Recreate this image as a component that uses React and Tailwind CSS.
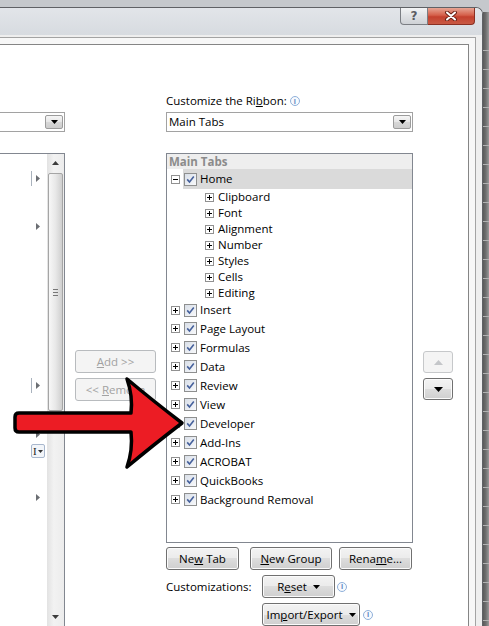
import React from "react";

const FONT = { fontFamily: '"Open Sans", "Noto Sans", sans-serif' };

function Check() {
  return (
    <div className="w-[13px] h-[13px] border border-[#8e8f8f] bg-gradient-to-br from-[#d9dfe8] to-[#f8f9fb] flex items-center justify-center shrink-0">
      <svg width="9" height="9" viewBox="0 0 9 9">
        <path d="M1.2 4.4 L3.5 7 L7.8 1.5" fill="none" stroke="#46619c" strokeWidth="1.6" />
      </svg>
    </div>
  );
}

function Expander({ minus }) {
  return (
    <div className="w-[9px] h-[9px] border border-[#919191] bg-white flex items-center justify-center shrink-0">
      <svg width="7" height="7" viewBox="0 0 7 7">
        <rect x="1" y="3" width="5" height="1" fill="#000" />
        {!minus && <rect x="3" y="1" width="1" height="5" fill="#000" />}
      </svg>
    </div>
  );
}

function Info() {
  return (
    <div className="w-[10px] h-[10px] rounded-full border border-[#8fb0da] bg-[#f7fafe] flex items-center justify-center shrink-0">
      <span className="text-[7px] leading-none font-bold text-[#5b86c0]">i</span>
    </div>
  );
}

function DownTri({ color = "#000" }) {
  return (
    <svg width="7" height="4" viewBox="0 0 7 4">
      <path d="M0 0 H7 L3.5 4 Z" fill={color} />
    </svg>
  );
}

function DropBtn() {
  return (
    <div className="w-[18px] h-[14px] mr-[1px] border border-[#9c9c9c] rounded-[2px] bg-[linear-gradient(#f6f6f6,#e6e6e6_50%,#d8d8d8_50%,#cdcdcd)] flex items-center justify-center">
      <DownTri />
    </div>
  );
}

const WINBTN =
  "h-[23px] shrink-0 border border-[#707070] rounded-[3px] bg-[linear-gradient(#f3f3f3,#ebebeb_50%,#dddddd_50%,#cfcfcf)] shadow-[inset_0_0_0_1px_#fbfbfb] flex items-center justify-center text-[11.5px] text-black";

const DISBTN =
  "h-[23px] shrink-0 border border-[#b8bbbe] rounded-[3px] bg-[#f4f4f4] flex items-center justify-center text-[11.5px] text-[#a2a2a2]";

const children = ["Clipboard", "Font", "Alignment", "Number", "Styles", "Cells", "Editing"];
const tops = [
  ["Insert", "h-[18px]"],
  ["Page Layout", "h-[19px]"],
  ["Formulas", "h-[19px]"],
  ["Data", "h-[19px]"],
  ["Review", "h-[19px]"],
  ["View", "h-[19px]"],
  ["Developer", "h-[19px]"],
  ["Add-Ins", "h-[19px]"],
  ["ACROBAT", "h-[19px]"],
  ["QuickBooks", "h-[19px]"],
  ["Background Removal", "h-[19px]"],
];

function RightTri() {
  return (
    <svg width="4" height="7" viewBox="0 0 4 7">
      <path d="M0 0 L4 3.5 L0 7 Z" fill="#6b6e73" />
    </svg>
  );
}

function SideArrow({ line, mt }) {
  return (
    <div className={`flex items-center h-[15px] shrink-0 ${mt}`}>
      <div className={`ml-[31px] w-px h-[15px] ${line ? "bg-[#a9b2bd]" : "bg-transparent"}`} />
      <div className="ml-[4px]">
        <RightTri />
      </div>
    </div>
  );
}

export default function App() {
  return (
    <div className="relative w-[489px] h-[626px] overflow-hidden flex bg-[#c5c8cc]" style={FONT}>
      {/* dialog */}
      <div className="w-[483px] h-[626px] shrink-0 flex flex-col pt-[7px]">
        <div className="flex-1 min-h-0 flex flex-col border-t border-r border-[#5f6165] rounded-tr-[7px] bg-[#f0f0f0] overflow-hidden">
          {/* title bar */}
          <div className="h-[27px] shrink-0 flex justify-end items-start pr-[7px] bg-gradient-to-b from-[#e2e5e9] to-[#d7dbe0]">
            <div className="w-[28px] h-[17px] border border-t-0 border-[#7b7e83] rounded-bl-[4px] bg-[linear-gradient(#f3f4f5,#dfe1e4_50%,#cfd2d6)] flex items-center justify-center">
              <span className="text-[12px] leading-none font-bold text-[#5a5d62]" style={{ fontFamily: '"DejaVu Sans", sans-serif' }}>?</span>
            </div>
            <div className="w-[47px] h-[17px] border border-t-0 border-l-0 border-[#8a2f22] rounded-br-[4px] bg-[linear-gradient(#e6a594,#d5604a_45%,#c4412e_55%,#c85a44)] flex items-center justify-center">
              <svg width="14" height="10" viewBox="0 0 14 10">
                <path d="M3 1.5 L11 8.5 M11 1.5 L3 8.5" stroke="#6a2418" strokeWidth="4" strokeLinecap="round" />
                <path d="M3 1.5 L11 8.5 M11 1.5 L3 8.5" stroke="#ffffff" strokeWidth="2" strokeLinecap="round" />
              </svg>
            </div>
          </div>
          {/* frame */}
          <div className="flex-1 min-h-0 flex flex-col pt-[2px] pr-[6px] bg-[#eeeeee]">
            <div className="flex-1 min-h-0 flex flex-col pt-[6px] pr-[6px] border-t border-r border-[#a3a3a3] bg-[#f7f7f7]">
              <div className="flex-1 min-h-0 overflow-hidden flex items-start border-t border-r border-[#858585] bg-white">
                {/* Col A */}
                <div className="w-[65px] flex flex-col pt-[67px] shrink-0">
                  <div className="h-[20px] shrink-0 border-y border-r border-[#a2a2a2] bg-white flex items-center justify-end">
                    <DropBtn />
                  </div>
                  <div className="mt-[21px] h-[480px] shrink-0 border-t border-r border-[#828790] flex">
                    <div className="w-[47px] flex flex-col">
                      <SideArrow line mt="mt-[17px]" />
                      <SideArrow mt="mt-[33px]" />
                      <SideArrow line mt="mt-[144px]" />
                      <SideArrow mt="mt-[34px]" />
                      <div className="mt-[2px] ml-[31px] w-[14px] h-[14px] shrink-0 border border-[#a8b7cd] rounded-[2px] bg-[#f2f5f9] flex items-center">
                        <span className="text-[11px] leading-none text-[#222] ml-[1px]" style={{ fontFamily: '"Liberation Serif", serif' }}>I</span>
                        <svg width="5" height="3" viewBox="0 0 5 3" className="ml-[1px]">
                          <path d="M0 0 H5 L2.5 3 Z" fill="#333" />
                        </svg>
                      </div>
                      <SideArrow mt="mt-[32px]" />
                    </div>
                    {/* scrollbar */}
                    <div className="w-[17px] flex flex-col bg-[linear-gradient(90deg,#e2e2e2,#f2f2f2_40%,#ececec)]">
                      <div className="h-[17px] shrink-0 flex items-center justify-center">
                        <svg width="7" height="4" viewBox="0 0 7 4">
                          <path d="M0 4 H7 L3.5 0 Z" fill="#3c3c3c" />
                        </svg>
                      </div>
                      <div className="mt-[2px] ml-[1px] w-[15px] h-[238px] shrink-0 rounded-[2px] border border-[#a5a5a5] bg-[linear-gradient(90deg,#f7f7f7,#e8e8e8_50%,#cfcfcf)] flex flex-col items-center justify-center gap-[2px]">
                        <div className="w-[5px] h-px bg-[#777]" />
                        <div className="w-[5px] h-px bg-[#777]" />
                        <div className="w-[5px] h-px bg-[#777]" />
                      </div>
                      <div className="mt-[202px] h-[8px] shrink-0 flex items-center justify-center">
                        <svg width="7" height="4" viewBox="0 0 7 4">
                          <path d="M0 0 H7 L3.5 4 Z" fill="#3c3c3c" />
                        </svg>
                      </div>
                    </div>
                  </div>
                </div>

                {/* Col B */}
                <div className="w-[101px] flex flex-col pt-[305px] shrink-0">
                  <div className={`ml-[10px] w-[81px] ${DISBTN}`}>
                    <span><u>A</u>dd &gt;&gt;</span>
                  </div>
                  <div className={`mt-[5px] ml-[10px] w-[81px] ${DISBTN}`}>
                    <span>&lt;&lt; <u>R</u>emove</span>
                  </div>
                </div>

                {/* Col C */}
                <div className="w-[247px] flex flex-col pt-[48px] shrink-0">
                  <div className="h-[16px] shrink-0 flex items-center gap-[3px] text-[11.5px] text-black">
                    <span>Customize the Ri<u>b</u>bon:</span>
                    <Info />
                  </div>
                  <div className="mt-[3px] h-[20px] shrink-0 border border-[#a2a2a2] bg-white flex items-center justify-between">
                    <span className="ml-[2px] text-[11.5px] text-black">Main Tabs</span>
                    <DropBtn />
                  </div>
                  <div className="mt-[21px] h-[390px] shrink-0 border border-[#828790] bg-white flex flex-col text-[11.5px] text-black">
                    <div className="h-[15px] shrink-0 bg-[#eeeeee] flex items-center pl-[2px]">
                      <span className="font-bold text-[#8b8b8b]">Main Tabs</span>
                    </div>
                    <div className="h-[20px] shrink-0 flex items-center pl-[4px]">
                      <Expander minus />
                      <div className="ml-[3px] flex-1 h-full bg-[#dadada] flex items-center pl-[1px]">
                        <Check />
                        <span className="ml-[3px]">Home</span>
                      </div>
                    </div>
                    {children.map((c) => (
                      <div key={c} className="h-[16px] shrink-0 flex items-center pl-[38px]">
                        <Expander />
                        <span className="ml-[4px]">{c}</span>
                      </div>
                    ))}
                    {tops.map(([t, h]) => (
                      <div key={t} className={`${h} shrink-0 flex items-center pl-[4px]`}>
                        <Expander />
                        <div className="ml-[4px]">
                          <Check />
                        </div>
                        <span className="ml-[3px]">{t}</span>
                      </div>
                    ))}
                  </div>
                  <div className="mt-[4px] flex shrink-0">
                    <div className={`w-[73px] ${WINBTN}`}>
                      <span>Ne<u>w</u> Tab</span>
                    </div>
                    <div className={`ml-[11px] w-[82px] ${WINBTN}`}>
                      <span><u>N</u>ew Group</span>
                    </div>
                    <div className={`ml-[7px] w-[73px] ${WINBTN}`}>
                      <span>Rena<u>m</u>e...</span>
                    </div>
                  </div>
                  <div className="mt-[5px] flex items-center shrink-0">
                    <span className="w-[96px] text-[11.5px] text-black">Customizations:</span>
                    <div className={`w-[73px] ${WINBTN} gap-[6px]`}>
                      <span>R<u>e</u>set</span>
                      <DownTri />
                    </div>
                    <div className="ml-[2px]">
                      <Info />
                    </div>
                  </div>
                  <div className="mt-[5px] flex items-center pl-[96px] shrink-0">
                    <div className={`w-[98px] ${WINBTN} gap-[6px]`}>
                      <span>Im<u>p</u>ort/Export</span>
                      <DownTri />
                    </div>
                    <div className="ml-[3px]">
                      <Info />
                    </div>
                  </div>
                </div>

                {/* Col D */}
                <div className="ml-[10px] w-[30px] flex flex-col pt-[306px] shrink-0">
                  <div className="h-[22px] shrink-0 border border-[#c6c8ca] rounded-[3px] bg-[#f4f4f4] flex items-center justify-center">
                    <svg width="9" height="5" viewBox="0 0 9 5">
                      <path d="M0 5 H9 L4.5 0 Z" fill="#c4c6c9" />
                    </svg>
                  </div>
                  <div className="mt-[5px] h-[22px] shrink-0 border border-[#707070] rounded-[3px] bg-[linear-gradient(#f3f3f3,#ebebeb_50%,#dddddd_50%,#cfcfcf)] shadow-[inset_0_0_0_1px_#fbfbfb] flex items-center justify-center">
                    <svg width="9" height="5" viewBox="0 0 9 5">
                      <path d="M0 0 H9 L4.5 5 Z" fill="#000" />
                    </svg>
                  </div>
                </div>
              </div>
            </div>
          </div>
        </div>
      </div>

      {/* background excel strip */}
      <div className="w-[6px] flex flex-col">
        <div className="h-[12px] shrink-0 bg-[#c5c8cc]" />
        <div className="flex-1 min-h-0 overflow-hidden flex flex-col bg-[linear-gradient(90deg,#5a5a5a,#6e6e6e_45%,#9a9a9a)] pt-[20px]">
          {Array.from({ length: 32 }).map((_, i) => (
            <div key={i} className="h-[19px] shrink-0 border-b border-[#b2b2b2]" />
          ))}
        </div>
      </div>

      {/* red arrow overlay */}
      <svg className="absolute left-0 top-[370px]" width="200" height="110" viewBox="0 0 200 110">
        <path
          d="M19 43 L131 43 Q133 26 127 9 Q152 30 182 53 Q152 76 127 97 Q133 80 131 62 L19 62 Q15 62 15 58 L15 47 Q15 43 19 43 Z"
          fill="#ec1c24"
          stroke="#000"
          strokeWidth="3.5"
          strokeLinejoin="round"
        />
      </svg>
    </div>
  );
}
